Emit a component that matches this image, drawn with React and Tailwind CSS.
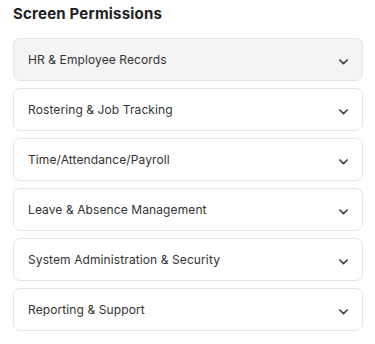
import React from "react";

const items = [
  "HR & Employee Records",
  "Rostering & Job Tracking",
  "Time/Attendance/Payroll",
  "Leave & Absence Management",
  "System Administration & Security",
  "Reporting & Support",
];

function Chevron() {
  return (
    <svg width="11" height="8" viewBox="0 0 11 8" fill="none">
      <path d="M1.8 2l3.7 3.7L9.2 2" stroke="#444" strokeWidth="1.7" strokeLinecap="round" strokeLinejoin="round" />
    </svg>
  );
}

export default function App() {
  return (
    <div className="w-[375px] h-[344px] bg-white pl-[13px] pr-[12px] pt-[4px]" style={{ fontFamily: "Inter, 'Noto Sans', sans-serif" }}>
      <h2 className="text-[15px] font-bold text-[#222] leading-[20px] tracking-[0.2px]">Screen Permissions</h2>
      <div className="mt-[14px] flex flex-col gap-[7px]">
        {items.map((t, i) => (
          <div
            key={t}
            className={`h-[43px] rounded-[7px] border flex items-center justify-between pl-[14px] pr-[13px] ${
              i === 0 ? "bg-[#f4f4f4] border-[#e6e6e6]" : "bg-white border-[#e6e6e6]"
            }`}
          >
            <span className="text-[12px] text-[#333] tracking-[0.1px]">{t}</span>
            <span className="mt-[4px]"><Chevron /></span>
          </div>
        ))}
      </div>
    </div>
  );
}
